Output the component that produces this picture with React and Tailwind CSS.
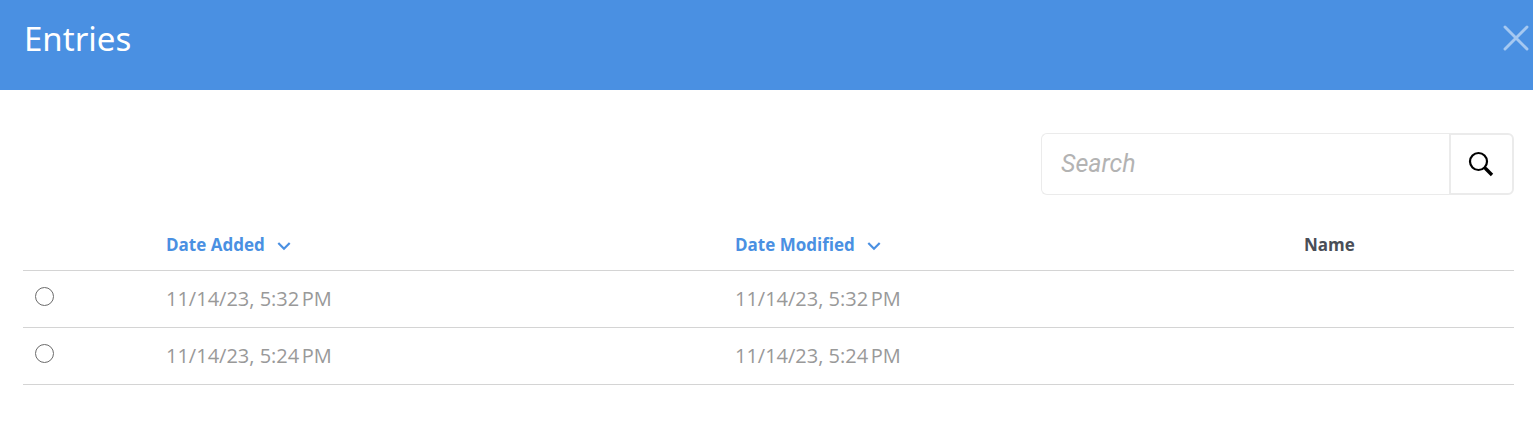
import React from "react";

const entries = [
  { id: "e1", added: "11/14/23, 5:32\u202fPM", modified: "11/14/23, 5:32\u202fPM", name: "" },
  { id: "e2", added: "11/14/23, 5:24\u202fPM", modified: "11/14/23, 5:24\u202fPM", name: "" },
];

function Chevron() {
  return (
    <svg className="mt-1 h-3 w-[14px]" viewBox="0 0 14 12" fill="none" stroke="currentColor" strokeWidth="2.2" aria-hidden="true">
      <path d="M1.3 3 7 8.7l5.7-5.7" />
    </svg>
  );
}

function SortHeader({ children }) {
  return (
    <th scope="col" className="px-3 text-left align-middle font-bold text-[#4a90e2]">
      <button type="button" className="flex items-center gap-3 font-bold">
        {children}
        <Chevron />
      </button>
    </th>
  );
}

export default function App() {
  return (
    <div className="bg-white font-['Open_Sans','Noto_Sans',sans-serif]">
      <header className="flex h-[90px] items-start justify-between bg-[#4a90e2] pt-4 pr-1 pl-6 text-white">
        <h1 className="font-['Noto_Sans',sans-serif] text-[33px] leading-[46px]">Entries</h1>
        <button type="button" aria-label="Close" className="mt-[9px] text-[#a5c8f1]">
          <svg className="h-[26px] w-[26px]" viewBox="0 0 26 26" fill="none" stroke="currentColor" strokeWidth="2.9" aria-hidden="true">
            <path d="M2 2l22 22M24 2 2 24" strokeLinecap="round" />
          </svg>
        </button>
      </header>

      <main className="pt-[43px] pr-[19px] pb-14 pl-[23px]">
        <form className="ml-auto flex h-[62px] w-full max-w-[473px]" onSubmit={(e) => e.preventDefault()}>
          <input
            type="text"
            aria-label="Search"
            placeholder="Search"
            className="min-w-0 flex-1 rounded-l-md border border-r-0 border-[#ebebeb] px-[19px] font-[Roboto,sans-serif] text-[25px] text-[#4a4e57] outline-none placeholder:text-[#b3b3b3] placeholder:italic"
          />
          <button
            type="submit"
            aria-label="Submit search"
            className="flex w-[65px] items-center justify-center rounded-r-md border-2 border-[#ebebeb] pr-[2px] text-black"
          >
            <svg className="h-[26px] w-[26px]" viewBox="0 0 26 26" fill="none" stroke="currentColor" aria-hidden="true">
              <circle cx="10.5" cy="10.5" r="8.5" strokeWidth="2.2" />
              <path d="M16.2 16.2 17.8 17.8" strokeWidth="2.4" />
              <path d="M17.3 17.3 24 24" strokeWidth="3.4" />
            </svg>
          </button>
        </form>

        <table className="mt-6 w-full table-fixed border-collapse">
          <colgroup>
            <col className="w-[131px]" />
            <col className="w-[38.16%]" />
            <col className="w-[38.16%]" />
            <col />
          </colgroup>
          <thead>
            <tr className="h-[51px] border-b border-[#d4d4d4] text-[17px]">
              <td />
              <SortHeader>Date Added</SortHeader>
              <SortHeader>Date Modified</SortHeader>
              <th scope="col" className="px-3 text-left align-middle font-bold text-[#4a4e57]">Name</th>
            </tr>
          </thead>
          <tbody>
            {entries.map((entry) => (
              <tr key={entry.id} className="h-[57px] border-b border-[#d4d4d4] text-xl text-[#999999]">
                <td className="px-3 align-middle">
                  <input
                    type="radio"
                    name="entry"
                    value={entry.id}
                    aria-label={`Select entry ${entry.added}`}
                    className="mb-1 block size-[19px] appearance-none rounded-full border border-[#6b6b6b] bg-white checked:bg-[#4a90e2]"
                  />
                </td>
                <td className="px-3 align-middle">{entry.added}</td>
                <td className="px-3 align-middle">{entry.modified}</td>
                <td className="px-3 align-middle">{entry.name}</td>
              </tr>
            ))}
          </tbody>
        </table>
      </main>
    </div>
  );
}
